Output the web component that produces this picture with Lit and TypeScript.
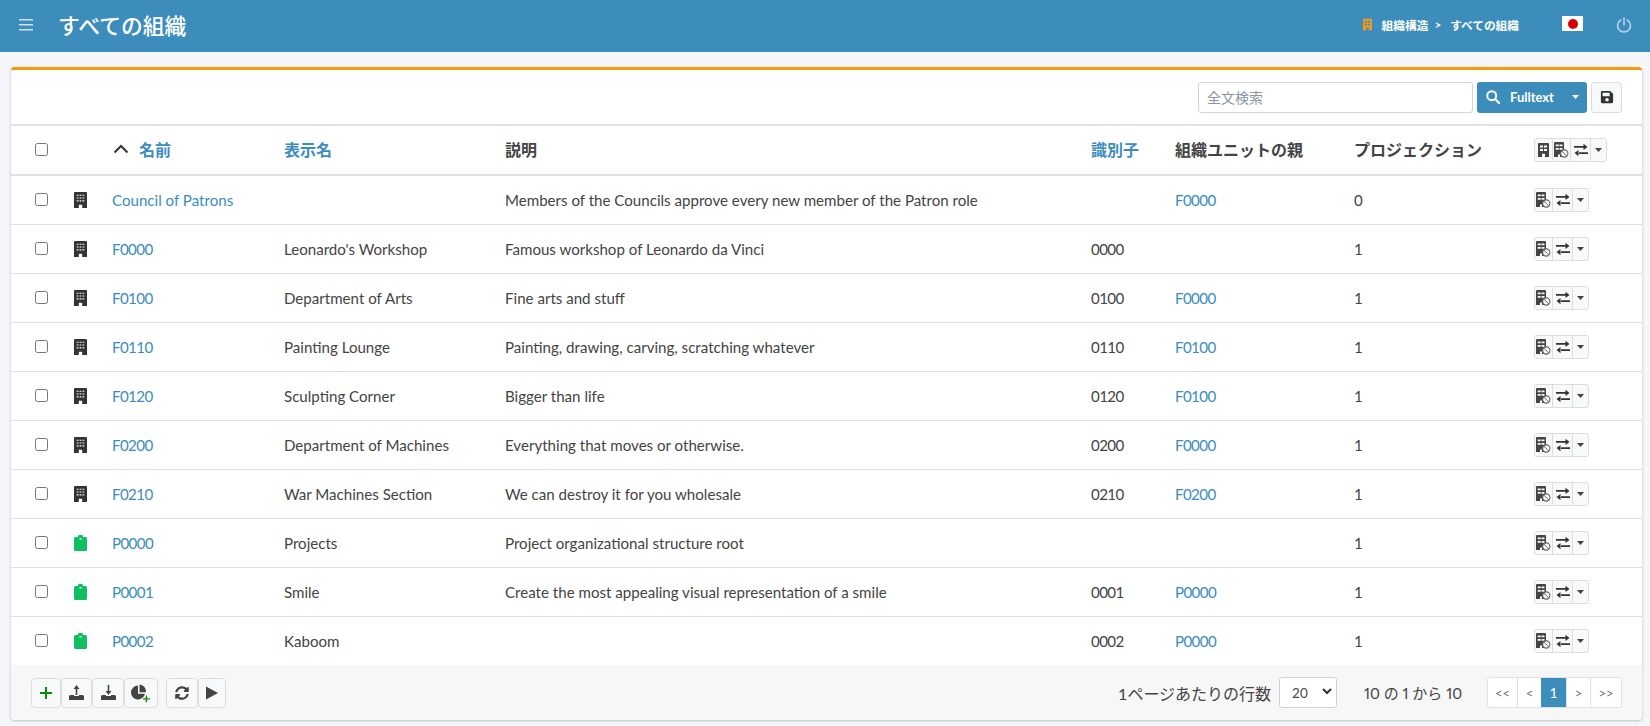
import { LitElement, html, css } from 'lit';
import { customElement } from 'lit/decorators.js';

type Org = { name: string; display: string; desc: string; id: string; parent: string; proj: string; kind: 'org' | 'project' };

const ROWS: Org[] = [
  { name: 'Council of Patrons', display: '', desc: 'Members of the Councils approve every new member of the Patron role', id: '', parent: 'F0000', proj: '0', kind: 'org' },
  { name: 'F0000', display: "Leonardo's Workshop", desc: 'Famous workshop of Leonardo da Vinci', id: '0000', parent: '', proj: '1', kind: 'org' },
  { name: 'F0100', display: 'Department of Arts', desc: 'Fine arts and stuff', id: '0100', parent: 'F0000', proj: '1', kind: 'org' },
  { name: 'F0110', display: 'Painting Lounge', desc: 'Painting, drawing, carving, scratching whatever', id: '0110', parent: 'F0100', proj: '1', kind: 'org' },
  { name: 'F0120', display: 'Sculpting Corner', desc: 'Bigger than life', id: '0120', parent: 'F0100', proj: '1', kind: 'org' },
  { name: 'F0200', display: 'Department of Machines', desc: 'Everything that moves or otherwise.', id: '0200', parent: 'F0000', proj: '1', kind: 'org' },
  { name: 'F0210', display: 'War Machines Section', desc: 'We can destroy it for you wholesale', id: '0210', parent: 'F0200', proj: '1', kind: 'org' },
  { name: 'P0000', display: 'Projects', desc: 'Project organizational structure root', id: '', parent: '', proj: '1', kind: 'project' },
  { name: 'P0001', display: 'Smile', desc: 'Create the most appealing visual representation of a smile', id: '0001', parent: 'P0000', proj: '1', kind: 'project' },
  { name: 'P0002', display: 'Kaboom', desc: '', id: '0002', parent: 'P0000', proj: '1', kind: 'project' },
];

// three columns of small windows, used in the table rows
const BUILDING_D =
  'M1 0h11a1 1 0 0 1 1 1v15H8.200v-3.200H4.800V16H0V1a1 1 0 0 1 1-1z' +
  'M2.700 2.700v1.100h1.800V2.700zM5.600 2.700v1.100h1.800V2.700zM8.500 2.700v1.100h1.800V2.700zM2.700 5.500v1.100h1.800V5.500zM5.600 5.500v1.100h1.800V5.500zM8.500 5.500v1.100h1.800V5.500zM2.700 8.300v1.100h1.800V8.300zM5.600 8.300v1.100h1.800V8.300zM8.500 8.300v1.100h1.800V8.300z';

// two columns, for the small versions
const BUILDING_SMALL_D =
  'M1 0h9a1 1 0 0 1 1 1v13H7v-3.200H4V14H0V1a1 1 0 0 1 1-1z' +
  'M2 2.500v2h3v-2zM6 2.500v2h3v-2zM2 6v2h3V6zM6 6v2h3V6z';

const building = (color = '#333') => html`
  <svg width="13" height="16" viewBox="0 0 13 16"><path fill=${color} fill-rule="evenodd" d=${BUILDING_D}></path></svg>`;

const buildingSmall = (w: number, h: number, color = '#444') => html`
  <svg width=${w} height=${h} viewBox="0 0 11 14"><path fill=${color} fill-rule="evenodd" d=${BUILDING_SMALL_D}></path></svg>`;

const buildingOff = () => html`
  <svg width="15" height="16" viewBox="0 0 15 16">
    <path fill="#444" fill-rule="evenodd" d="M1 0h8a1 1 0 0 1 1 1v14H6v-2.500H4V15H0V1a1 1 0 0 1 1-1zM1.700 2.500v1.700h3V2.500zM5.500 2.500v1.700h3V2.500zM1.700 6v1.700h3V6zM5.500 6v1.700h3V6z"></path>
    <circle cx="10.300" cy="11.500" r="3.600" fill="#f8f9fa" stroke="#666" stroke-width="1.100"></circle>
    <path d="M7.800 9l5 5" stroke="#666" stroke-width="1"></path>
  </svg>`;

const swap = () => html`
  <svg width="14" height="14" viewBox="0 0 14 14" fill="#333">
    <path d="M0 3.100h10v1.600H0zM9.500 .800L13.500 3.900 9.500 7zM4 9.300h10v1.600H4zM4.500 7L.500 10.100l4 3.100z"></path>
  </svg>`;

const caret = (color = '#444') => html`
  <svg width="7" height="4" viewBox="0 0 7 4"><path fill=${color} d="M0 0h7L3.500 4z"></path></svg>`;

const clipboard = () => html`
  <svg width="13" height="16" viewBox="0 0 13 16">
    <path fill="#11bf63" fill-rule="evenodd" d="M1.500 2H4a2.500 2.500 0 0 1 5 0h2.500A1.500 1.500 0 0 1 13 3.500v11a1.500 1.500 0 0 1-1.500 1.500h-10A1.500 1.500 0 0 1 0 14.500v-11A1.500 1.500 0 0 1 1.500 2zM5.500 3.300v1.200h2V3.300z"></path>
  </svg>`;

@customElement('app-root')
export class AppRoot extends LitElement {
  static styles = css`
    :host {
      display: block;
      min-height: 726px;
      background: #f4f6f9;
      font-family: 'Lato', 'Noto Sans CJK JP', sans-serif;
      font-size: 15.100px;
      color: #444;
    }
    a { color: #3c8dbc; text-decoration: none; }
    .code { letter-spacing: -0.6px; }

    .topbar {
      display: flex;
      align-items: center;
      height: 52px;
      background: #3c8dbc;
      color: #fff;
      box-sizing: border-box;
    }
    .menu { margin: 0 0 2px 19px; display: flex; }
    .title { margin: 0 0 3px 25px; font-size: 21.800px; font-weight: 500; }
    .crumbs {
      margin: 0 0 4px auto;
      display: flex;
      align-items: center;
      font-size: 11.700px;
      font-weight: 700;
    }
    .crumbs .sep { margin: 0 9px 0 6px; }
    .crumbs svg { margin-right: 10px; }
    .flag {
      margin: 0 0 5px 43px;
      width: 21px;
      height: 15px;
      background: #fff;
      display: flex;
      align-items: center;
      justify-content: center;
    }
    .flag i { width: 10px; height: 10px; border-radius: 50%; background: #d80000; }
    .power { margin: 0 18px 2px 33px; display: flex; }

    .page { padding: 15px 8px 6px 11px; }
    .card {
      background: #fff;
      border-top: 3px solid #f39c12;
      border-radius: 4px;
      box-shadow: 0 0 1px rgba(0, 0, 0, 0.13), 0 1px 3px rgba(0, 0, 0, 0.2);
      overflow: hidden;
    }
    .toolbar {
      display: flex;
      justify-content: flex-end;
      align-items: center;
      gap: 4px;
      height: 56px;
      padding-right: 20px;
      border-bottom: 2px solid #dee2e6;
      box-sizing: border-box;
    }
    .search {
      width: 275px;
      height: 31px;
      box-sizing: border-box;
      border: 1px solid #ced4da;
      border-radius: 3px;
      padding: 0 8px;
      font: inherit;
      font-size: 14px;
      color: #444;
    }
    .search::placeholder { color: #8e959c; opacity: 1; }
    .fulltext {
      width: 110px;
      height: 31px;
      display: flex;
      align-items: center;
      box-sizing: border-box;
      padding: 0 8px 0 9px;
      background: #3c8dbc;
      color: #fff;
      border-radius: 3px;
      font-size: 13px;
      font-weight: 700;
    }
    .fulltext span { margin-left: 10px; flex: 1; }
    .save {
      width: 31px;
      height: 31px;
      display: flex;
      align-items: center;
      justify-content: center;
      box-sizing: border-box;
      background: #f8f9fa;
      border: 1px solid #ddd;
      border-radius: 3px;
    }

    table { width: 100%; border-collapse: collapse; table-layout: fixed; }
    th, td { padding: 0 8px; text-align: left; vertical-align: middle; font-weight: 400; }
    th { height: 46px; padding-bottom: 2px; font-size: 16px; font-weight: 700; border-bottom: 2px solid #dee2e6; }
    td { height: 48px; border-bottom: 1px solid #dee2e6; }
    tr:last-child td { border-bottom: 0; }
    th a { color: #3c8dbc; }
    .chk { padding: 0 0 0 24px; }
    .chk input { display: block; width: 13px; height: 13px; margin: -1px 0 0; }
    .ico { padding: 0 0 0 13px; }
    .ico svg { display: block; }
    .sort { display: flex; align-items: center; gap: 10px; padding-left: 1px; }
    .acts { padding: 0 0 0 8px; }

    .group { display: inline-flex; height: 24px; vertical-align: middle; }
    .group span {
      display: flex;
      align-items: center;
      justify-content: center;
      height: 24px;
      box-sizing: border-box;
      background: #f8f9fa;
      border: 1px solid #ddd;
      margin-left: -1px;
    }
    .group span:first-child { border-radius: 3px 0 0 3px; margin-left: 0; }
    .group span:last-child { border-radius: 0 3px 3px 0; }
    .a1 { width: 19px; }
    .a2 { width: 21px; }
    .a3 { width: 17px; }

    .footer {
      display: flex;
      align-items: center;
      height: 55px;
      padding: 0 20px;
      background: #f7f7f7;
      box-sizing: border-box;
    }
    .tools { display: flex; }
    .tools + .tools { margin-left: 8px; }
    .tool {
      display: flex;
      align-items: center;
      justify-content: center;
      height: 30px;
      box-sizing: border-box;
      background: #f8f9fa;
      border: 1px solid #ddd;
      border-radius: 4px;
    }
    .perpage { margin-left: auto; font-size: 16px; }
    .selwrap { position: relative; margin-left: 8px; display: flex; }
    select {
      appearance: none;
      width: 58px;
      height: 31px;
      box-sizing: border-box;
      padding: 0 0 0 12px;
      background: #fff;
      border: 1px solid #ced4da;
      border-radius: 3px;
      font: inherit;
      font-size: 13.500px;
      color: #444;
    }
    .selwrap svg { position: absolute; right: 5px; top: 11px; pointer-events: none; }
    .count { margin-left: 27px; font-size: 15px; font-variant-numeric: proportional-nums; }
    .pager {
      display: flex;
      height: 31px;
      margin-left: 25px;
      background: #fff;
      border: 1px solid #dee2e6;
      border-radius: 3px;
      box-sizing: border-box;
    }
    .pager span {
      display: flex;
      align-items: center;
      justify-content: center;
      border-left: 1px solid #dee2e6;
      font-size: 13px;
      color: #6c757d;
    }
    .pager span:first-child { border-left: 0; }
    .pager .on { background: #3c8dbc; color: #fff; font-size: 14px; border-left: 0; }
  `;

  private renderActions(withOrg: boolean) {
    return html`<div class="group">
      ${withOrg ? html`<span class="a1">${buildingSmall(11, 14)}</span>` : ''}
      <span class="a1">${buildingOff()}</span>
      <span class="a2">${swap()}</span>
      <span class="a3">${caret()}</span>
    </div>`;
  }

  private renderRow(r: Org) {
    // the codes have digits, which come out too wide in this font
    const nameClass = r.kind === 'org' && r.name.length > 5 ? '' : 'code';
    return html`<tr>
      <td class="chk"><input type="checkbox" /></td>
      <td class="ico">${r.kind === 'org' ? building() : clipboard()}</td>
      <td><a class=${nameClass} href="#">${r.name}</a></td>
      <td>${r.display}</td>
      <td>${r.desc}</td>
      <td class="code">${r.id}</td>
      <td>${r.parent ? html`<a class="code" href="#">${r.parent}</a>` : ''}</td>
      <td>${r.proj}</td>
      <td class="acts">${this.renderActions(false)}</td>
    </tr>`;
  }

  render() {
    return html`
      <header class="topbar">
        <span class="menu">
          <svg width="14" height="12" viewBox="0 0 14 12" fill="rgba(255,255,255,.75)"><path d="M0 0h14v1.500H0zM0 5h14v1.500H0zM0 10h14v1.500H0z"></path></svg>
        </span>
        <span class="title">すべての組織</span>
        <div class="crumbs">
          ${buildingSmall(9, 13, '#f39c12')}
          <span>組織構造</span><span class="sep">&gt;</span><span>すべての組織</span>
        </div>
        <span class="flag"><i></i></span>
        <span class="power">
          <svg width="16" height="16" viewBox="0 0 16 16" fill="none" stroke="rgba(255,255,255,.65)" stroke-width="1.500" stroke-linecap="round"><path d="M4.700 3a6.500 6.500 0 1 0 6.600 0M8 1v7"></path></svg>
        </span>
      </header>
      <div class="page">
        <section class="card">
          <div class="toolbar">
            <input class="search" placeholder="全文検索" />
            <div class="fulltext">
              <svg width="14" height="14" viewBox="0 0 14 14" fill="none" stroke="#fff" stroke-width="2"><circle cx="5.700" cy="5.700" r="4.500"></circle><path d="M9 9l4.300 4.300" stroke-linecap="round"></path></svg>
              <span>Fulltext</span>
              ${caret('#fff')}
            </div>
            <div class="save">
              <svg width="14" height="14" viewBox="0 0 448 512"><path fill="#333" d="M433.941 129.941l-83.882-83.882A48 48 0 0 0 316.118 32H48C21.490 32 0 53.490 0 80v352c0 26.510 21.490 48 48 48h352c26.510 0 48-21.490 48-48V163.882a48 48 0 0 0-14.059-33.941zM224 416c-35.346 0-64-28.654-64-64 0-35.346 28.654-64 64-64s64 28.654 64 64c0 35.346-28.654 64-64 64zm96-304.520V212c0 6.627-5.373 12-12 12H76c-6.627 0-12-5.373-12-12V108c0-6.627 5.373-12 12-12h228.520c3.183 0 6.235 1.264 8.485 3.515l3.480 3.480A11.996 11.996 0 0 1 320 111.480z"></path></svg>
            </div>
          </div>
          <table>
            <colgroup>
              <col style="width:50px" /><col style="width:43px" /><col style="width:172px" /><col style="width:221px" />
              <col style="width:586px" /><col style="width:84px" /><col style="width:179px" /><col style="width:180px" /><col />
            </colgroup>
            <thead>
              <tr>
                <th class="chk"><input type="checkbox" /></th>
                <th></th>
                <th>
                  <div class="sort">
                    <svg width="16" height="10" viewBox="0 0 16 10" fill="none" stroke="#333" stroke-width="2"><path d="M1.500 8.500L8 2l6.500 6.500"></path></svg>
                    <a href="#">名前</a>
                  </div>
                </th>
                <th><a href="#">表示名</a></th>
                <th>説明</th>
                <th><a href="#">識別子</a></th>
                <th>組織ユニットの親</th>
                <th>プロジェクション</th>
                <th class="acts">${this.renderActions(true)}</th>
              </tr>
            </thead>
            <tbody>${ROWS.map(r => this.renderRow(r))}</tbody>
          </table>
          <footer class="footer">
            <div class="tools">
              <span class="tool" style="width:30px">
                <svg width="14" height="14" viewBox="0 0 14 14"><path fill="#0a8a0a" d="M6 1h2v5h5v2H8v5H6V8H1V6h5z"></path></svg>
              </span>
              <span class="tool" style="width:31px">
                <svg width="15" height="15" viewBox="0 0 15 15" fill="#444"><path d="M1.500 10H5v1h5v-1h3.500A1.500 1.500 0 0 1 15 11.500V15H0v-3.500A1.500 1.500 0 0 1 1.500 10z"></path><path d="M6.700 10V4H4.500l3-4 3 4H8.300v6z"></path></svg>
              </span>
              <span class="tool" style="width:32px">
                <svg width="15" height="15" viewBox="0 0 15 15" fill="#444"><path d="M1.500 10H5v1h5v-1h3.500A1.500 1.500 0 0 1 15 11.500V15H0v-3.500A1.500 1.500 0 0 1 1.500 10z"></path><path d="M6.700 0v6H4.500l3 4 3-4H8.300V0z"></path></svg>
              </span>
              <span class="tool" style="width:34px">
                <svg width="20" height="20" viewBox="0 0 20 20">
                  <path fill="#444" d="M7 2.500a7 7 0 1 0 6.900 8.200H7z"></path>
                  <path fill="#444" d="M8.500 1.500a7 7 0 0 1 6.600 7.700H8.500z"></path>
                  <path fill="#0a8a0a" d="M14.700 12.500h1.400v2.700h2.700v1.400h-2.700v2.700h-1.400v-2.700H12v-1.400h2.700z"></path>
                </svg>
              </span>
            </div>
            <div class="tools">
              <span class="tool" style="width:32px">
                <svg width="14" height="14" viewBox="0 0 512 512"><path fill="#444" d="M370.720 133.280C339.458 104.008 298.888 87.962 255.848 88c-77.458.068-144.328 53.178-162.791 126.850-1.344 5.363-6.122 9.150-11.651 9.150H24.103c-7.498 0-13.194-6.807-11.807-14.176C33.933 94.924 134.813 8 256 8c66.448 0 126.791 26.136 171.315 68.685L463.030 40.970C478.149 25.851 504 36.559 504 57.941V192c0 13.255-10.745 24-24 24H345.941c-21.382 0-32.090-25.851-16.971-40.971l41.750-41.749zM32 296h134.059c21.382 0 32.090 25.851 16.971 40.971l-41.750 41.750c31.262 29.273 71.835 45.319 114.876 45.280 77.418-.070 144.315-53.144 162.787-126.849 1.344-5.363 6.122-9.150 11.651-9.150h57.304c7.498 0 13.194 6.807 11.807 14.176C478.067 417.076 377.187 504 256 504c-66.448 0-126.791-26.136-171.315-68.685L48.970 471.030C33.851 486.149 8 475.441 8 454.059V320c0-13.255 10.745-24 24-24z"></path></svg>
              </span>
              <span class="tool" style="width:28px">
                <svg width="12" height="14" viewBox="0 0 12 14"><path fill="#444" d="M0 .500v13L12 7z"></path></svg>
              </span>
            </div>
            <span class="perpage">1ページあたりの行数</span>
            <div class="selwrap">
              <select><option>20</option></select>
              <svg width="10" height="7" viewBox="0 0 10 7" fill="none" stroke="#333" stroke-width="2"><path d="M1 1l4 4 4-4"></path></svg>
            </div>
            <span class="count">10 の 1 から 10</span>
            <nav class="pager">
              <span style="width:29px">&lt;&lt;</span>
              <span style="width:23px">&lt;</span>
              <span class="on" style="width:25px">1</span>
              <span style="width:23px">&gt;</span>
              <span style="width:30px">&gt;&gt;</span>
            </nav>
          </footer>
        </section>
      </div>
    `;
  }
}
